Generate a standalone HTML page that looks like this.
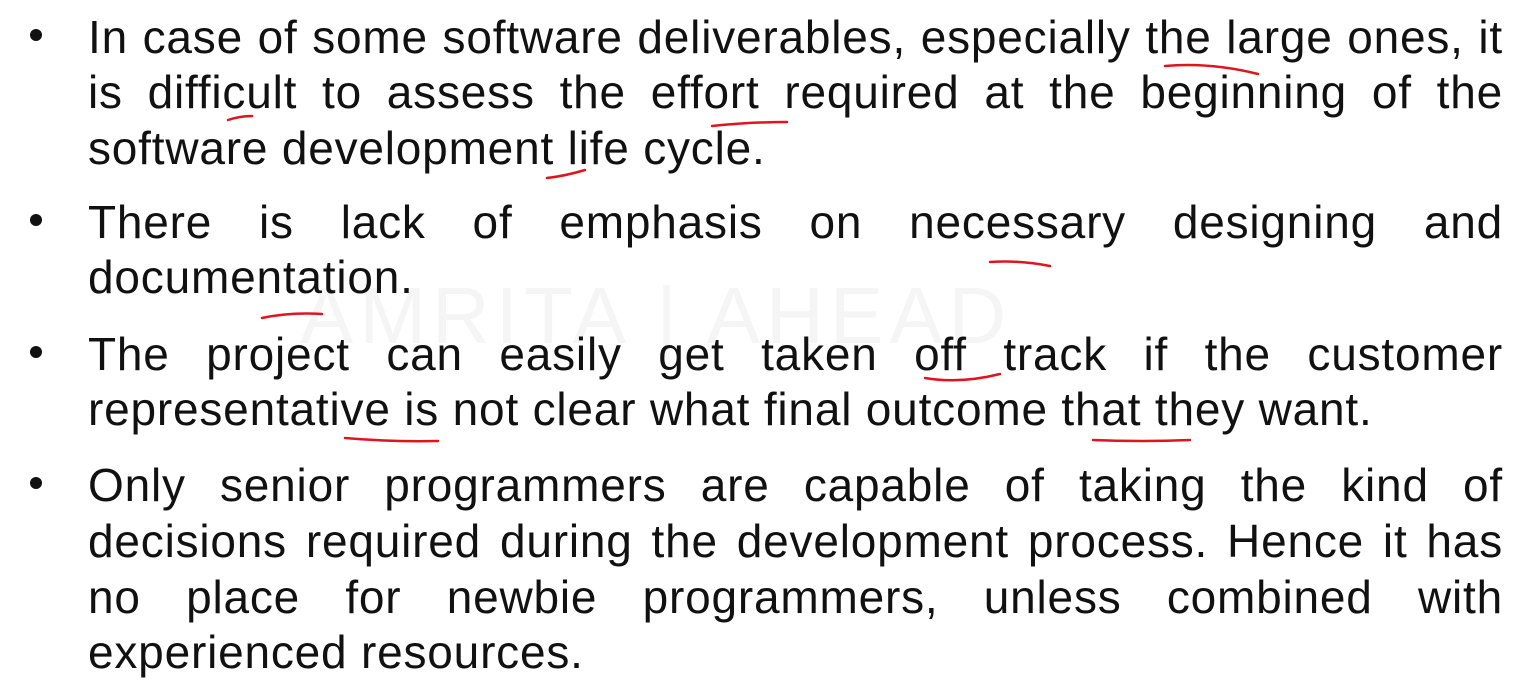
<!DOCTYPE html>
<html><head><meta charset="utf-8"><style>
html,body{margin:0;padding:0;background:#fff;}
body{width:1540px;height:699px;position:relative;overflow:hidden;font-family:"Liberation Sans",sans-serif;color:#111;}
.l{position:absolute;left:88px;width:1415px;height:56px;line-height:56px;font-size:46px;letter-spacing:0.8px;white-space:nowrap;}
.j{text-align:justify;text-align-last:justify;}
.b{position:absolute;left:30px;width:12px;height:12px;border-radius:50%;background:#111;}
.wm{position:absolute;left:300px;top:270px;font-size:80px;color:#f5f5f5;letter-spacing:6px;}
</style></head><body>
<div class="wm">AMRITA | AHEAD</div>
<div class="b" style="top:29px"></div>
<div class="l j" style="top:9px">In case of some software deliverables, especially the large ones, it</div>
<div class="l j" style="top:64px">is difficult to assess the effort required at the beginning of the</div>
<div class="l" style="top:120px">software development life cycle.</div>
<div class="b" style="top:214px"></div>
<div class="l j" style="top:194px">There is lack of emphasis on necessary designing and</div>
<div class="l" style="top:249px">documentation.</div>
<div class="b" style="top:346px"></div>
<div class="l j" style="top:326px">The project can easily get taken off track if the customer</div>
<div class="l" style="top:381px">representative is not clear what final outcome that they want.</div>
<div class="b" style="top:477px"></div>
<div class="l j" style="top:457px">Only senior programmers are capable of taking the kind of</div>
<div class="l j" style="top:513px">decisions required during the development process. Hence it has</div>
<div class="l j" style="top:569px">no place for newbie programmers, unless combined with</div>
<div class="l" style="top:624px">experienced resources.</div>
<svg width="1540" height="699" style="position:absolute;left:0;top:0" fill="none" stroke="#e0141e" stroke-width="2.5" stroke-linecap="round">
<path d="M1165 66 Q1210 62 1258 74"/>
<path d="M228 120 Q240 116 252 116"/>
<path d="M712 126 Q750 122 787 122"/>
<path d="M547 178 Q565 176 585 170"/>
<path d="M990 262 Q1020 260 1050 266"/>
<path d="M262 318 Q290 312 322 314"/>
<path d="M925 378 Q960 384 1000 374"/>
<path d="M345 438 Q390 442 438 441"/>
<path d="M1093 440 Q1140 442 1190 440"/>
</svg>
</body></html>
